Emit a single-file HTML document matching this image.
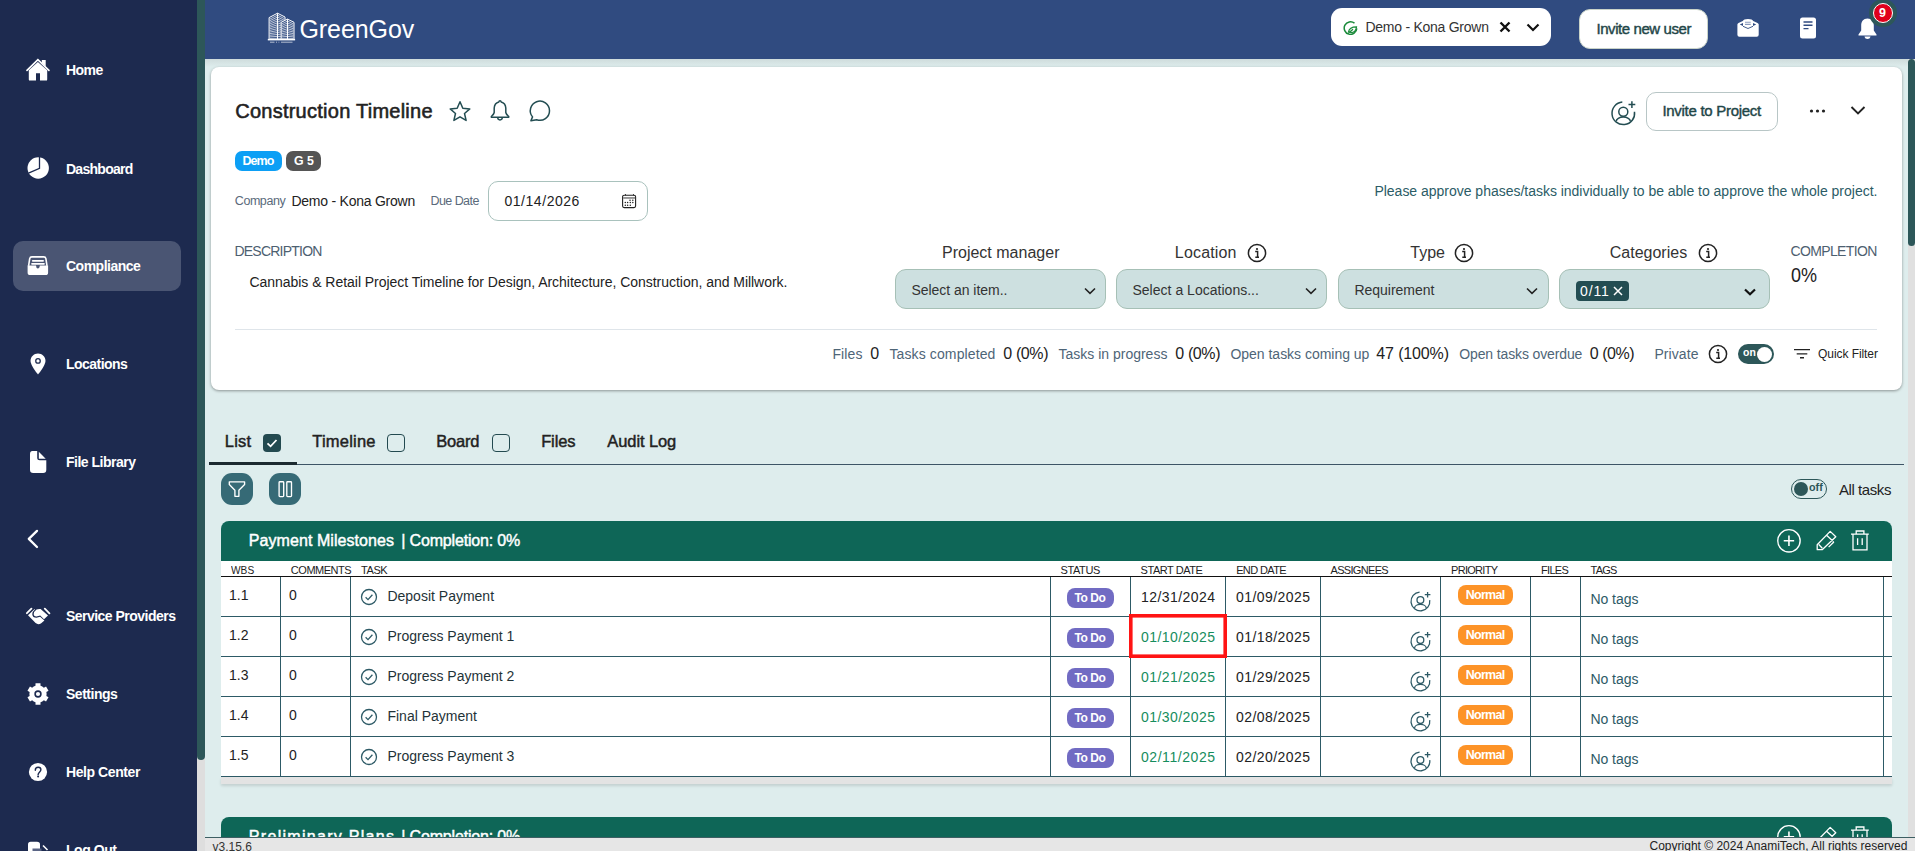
<!DOCTYPE html>
<html><head><meta charset="utf-8"><style>
html,body{margin:0;padding:0;width:1915px;height:851px;overflow:hidden;background:#deeded;font-family:"Liberation Sans",sans-serif}
.a{position:absolute}
.t{line-height:1;white-space:pre}
</style></head><body>
<div class="a" style="left:0px;top:0px;width:197px;height:851px;background:#1d2a4f"></div><div class="a" style="left:13px;top:241px;width:168px;height:50px;background:#4a5573;border-radius:10px"></div><div class="a t" style="left:65.94px;top:63.17px;font-size:14px;font-weight:700;color:#fff;letter-spacing:-0.509px;">Home</div><div class="a t" style="left:65.94px;top:161.77px;font-size:14px;font-weight:700;color:#fff;letter-spacing:-0.718px;">Dashboard</div><div class="a t" style="left:65.94px;top:259.17px;font-size:14px;font-weight:700;color:#fff;letter-spacing:-0.487px;">Compliance</div><div class="a t" style="left:65.94px;top:357.17px;font-size:14px;font-weight:700;color:#fff;letter-spacing:-0.518px;">Locations</div><div class="a t" style="left:65.94px;top:455.17px;font-size:14px;font-weight:700;color:#fff;letter-spacing:-0.499px;">File Library</div><div class="a t" style="left:65.94px;top:608.67px;font-size:14px;font-weight:700;color:#fff;letter-spacing:-0.520px;">Service Providers</div><div class="a t" style="left:65.94px;top:686.87px;font-size:14px;font-weight:700;color:#fff;letter-spacing:-0.465px;">Settings</div><div class="a t" style="left:65.94px;top:764.87px;font-size:14px;font-weight:700;color:#fff;letter-spacing:-0.410px;">Help Center</div><div class="a t" style="left:65.94px;top:843.17px;font-size:14px;font-weight:700;color:#fff;letter-spacing:-0.446px;">Log Out</div><svg class="a" style="left:26px;top:57px;" width="24" height="25" viewBox="0 0 24 25"><path d="M1 13.3 L11.9 2.6 L22.9 13.3" stroke="#fff" stroke-width="1.7" fill="none" stroke-linecap="round"/><path d="M15.8 3 H19.7 V9.5 L15.8 5.8 Z" fill="#fff"/><path d="M2.8 13.2 L11.9 4.9 L21.2 13.2 V22.4 Q21.2 23.6 20 23.6 H14 V16.2 H10 V23.6 H4 Q2.8 23.6 2.8 22.4 Z" fill="#fff"/></svg><svg class="a" style="left:27px;top:157px;" width="23" height="23" viewBox="0 0 23 23"><circle cx="11.2" cy="11" r="10.7" fill="#fff"/><path d="M12.5 -0.5 V11.4 L1.5 16.2" stroke="#1d2a4f" stroke-width="1.3" fill="none"/></svg><svg class="a" style="left:27px;top:256px;" width="22" height="20" viewBox="0 0 22 20"><path d="M1.6 9.8 L2.7 2.6 Q3.1 0.9 4.9 0.9 H16.7 Q18.5 0.9 18.9 2.6 L20 9.8" stroke="#fff" stroke-width="1.6" fill="none"/><rect x="4.9" y="3.9" width="12.1" height="1.8" rx=".9" fill="#fff"/><rect x="4.1" y="6.9" width="13.8" height="1.9" rx=".95" fill="#fff"/><path d="M0.6 9.6 H9 Q9.2 12.6 10.8 12.6 Q12.6 12.6 12.8 9.6 H21.1 V16.4 Q21.1 19 18.6 19 H3.1 Q0.6 19 0.6 16.4 Z" fill="#fff"/></svg><svg class="a" style="left:30px;top:353px;" width="16" height="22" viewBox="0 0 16 22"><path d="M8 0.5 C3.8 0.5 0.5 3.8 0.5 8 C0.5 12.5 8 21.5 8 21.5 C8 21.5 15.5 12.5 15.5 8 C15.5 3.8 12.2 0.5 8 0.5 Z" fill="#fff"/><circle cx="8" cy="7.9" r="2.9" fill="#1d2a4f"/><circle cx="8" cy="7.9" r="1.6" fill="#fff"/></svg><svg class="a" style="left:29px;top:450px;" width="18" height="24" viewBox="0 0 18 24"><path d="M3.4 1 H8.2 V7.8 Q8.2 10.3 10.7 10.3 H17.3 V19.8 Q17.3 23 14.1 23 H4.2 Q1 23 1 19.8 V4.2 Q1 1 3.4 1 Z" fill="#fff"/><path d="M9.8 1.8 L16.7 8.8 H9.8 Z" fill="#fff"/></svg><svg class="a" style="left:26px;top:528px;" width="14" height="22" viewBox="0 0 14 22"><path d="M11 2.9 L2.8 10.9 L11 19" stroke="#fff" stroke-width="2.3" fill="none" stroke-linecap="round" stroke-linejoin="round"/></svg><svg class="a" style="left:26px;top:607px;" width="25" height="18" viewBox="0 0 25 18"><path d="M0.9 6.2 L5.4 1.7 M18.8 1.7 L23.4 6.4" stroke="#fff" stroke-width="1.8" stroke-linecap="round"/><path d="M10.5 2.6 Q12.5 1.8 14.6 2.1 L22 8.4 L18 12.2 L14.2 8.4 L10.5 9.4 Q7.6 9.5 7.7 7 Q7.9 4.6 10.5 2.6 Z" fill="#fff"/><path d="M2 8.2 L8.3 2.3 L9.2 2.3 Q6.2 4.8 6.3 7.2 Q6.5 10.7 10.5 10.7 L14.1 9.8 L18.4 13.4 L15.2 16.3 Q12.2 18.2 9.6 16.1 Z" fill="#fff"/></svg><svg class="a" style="left:27px;top:683px;" width="22" height="22" viewBox="0 0 22 22"><path fill="#fff" d="M15.30 3.55 L13.51 2.78 L13.47 0.28 L8.53 0.28 L8.49 2.78 L6.70 3.55 L6.70 3.55 L5.13 4.71 L2.96 3.50 L0.48 7.78 L2.62 9.07 L2.40 11.00 L2.40 11.00 L2.62 12.93 L0.48 14.22 L2.96 18.50 L5.13 17.29 L6.70 18.45 L6.70 18.45 L8.49 19.22 L8.53 21.72 L13.47 21.72 L13.51 19.22 L15.30 18.45 L15.30 18.45 L16.87 17.29 L19.04 18.50 L21.52 14.22 L19.38 12.93 L19.60 11.00 L19.60 11.00 L19.38 9.07 L21.52 7.78 L19.04 3.50 L16.87 4.71 L15.30 3.55 Z"/><circle cx="11" cy="11" r="3.7" fill="#1d2a4f"/><circle cx="11" cy="11" r="2.1" fill="#fff"/></svg><svg class="a" style="left:28px;top:762px;" width="20" height="20" viewBox="0 0 20 20"><circle cx="10" cy="10" r="9.1" fill="#fff"/><path d="M7.3 8.2 C7.3 6.3 8.5 5.3 10.2 5.3 C11.9 5.3 12.9 6.3 12.9 7.8 C12.9 9.8 10.1 10.3 10.1 12.8" stroke="#1d2a4f" stroke-width="1.4" fill="none" stroke-linecap="round"/><circle cx="10.1" cy="14.6" r="1" fill="#1d2a4f"/></svg><svg class="a" style="left:27px;top:841px;" width="24" height="12" viewBox="0 0 24 12"><path d="M1 12 V3.5 Q1 0.8 3.7 0.8 H10 Q13 0.8 13 3.5 V12 Z" fill="#fff"/><rect x="5.5" y="7.5" width="9" height="5" fill="#5a6585"/><path d="M16 4.5 L20.5 9" stroke="#fff" stroke-width="1.6"/></svg><div class="a" style="left:197px;top:0px;width:8px;height:851px;background:#dedede"></div><div class="a" style="left:197px;top:0px;width:8px;height:760px;background:#2d5759;border-radius:0 0 4px 4px"></div><div class="a" style="left:205px;top:0px;width:1710px;height:59px;background:#304b80"></div><svg class="a" style="left:264px;top:10px;" width="36" height="36" viewBox="0 0 36 36"><path d="M5.1 29.3 V7.6 L13.5 3.2 L21 7 V29.3" fill="#304b80" stroke="#fff" stroke-width="1"/><path d="M13.5 3.2 V29.3" stroke="#fff" stroke-width="1.1"/><path d="M5.70 9.21 L13.5 5.13 L20.40 8.65" stroke="#fff" stroke-width="0.75" fill="none" opacity=".9"/><path d="M5.70 10.81 L13.5 7.07 L20.40 10.30" stroke="#fff" stroke-width="0.75" fill="none" opacity=".9"/><path d="M5.70 12.42 L13.5 9.00 L20.40 11.96" stroke="#fff" stroke-width="0.75" fill="none" opacity=".9"/><path d="M5.70 14.03 L13.5 10.93 L20.40 13.61" stroke="#fff" stroke-width="0.75" fill="none" opacity=".9"/><path d="M5.70 15.64 L13.5 12.87 L20.40 15.26" stroke="#fff" stroke-width="0.75" fill="none" opacity=".9"/><path d="M5.70 17.24 L13.5 14.80 L20.40 16.91" stroke="#fff" stroke-width="0.75" fill="none" opacity=".9"/><path d="M5.70 18.85 L13.5 16.73 L20.40 18.56" stroke="#fff" stroke-width="0.75" fill="none" opacity=".9"/><path d="M5.70 20.46 L13.5 18.67 L20.40 20.21" stroke="#fff" stroke-width="0.75" fill="none" opacity=".9"/><path d="M5.70 22.07 L13.5 20.60 L20.40 21.87" stroke="#fff" stroke-width="0.75" fill="none" opacity=".9"/><path d="M5.70 23.67 L13.5 22.53 L20.40 23.52" stroke="#fff" stroke-width="0.75" fill="none" opacity=".9"/><path d="M5.70 25.28 L13.5 24.47 L20.40 25.17" stroke="#fff" stroke-width="0.75" fill="none" opacity=".9"/><path d="M5.70 26.89 L13.5 26.40 L20.40 26.82" stroke="#fff" stroke-width="0.75" fill="none" opacity=".9"/><path d="M5.70 28.50 L13.5 28.33 L20.40 28.47" stroke="#fff" stroke-width="0.75" fill="none" opacity=".9"/><path d="M17.2 29.3 V12.3 L23.5 9.1 L30 12.3 V29.3" fill="#304b80" stroke="#fff" stroke-width="1"/><path d="M23.5 9.1 V29.3" stroke="#fff" stroke-width="1.1"/><path d="M17.80 13.92 L23.5 11.02 L29.40 13.92" stroke="#fff" stroke-width="0.75" fill="none" opacity=".9"/><path d="M17.80 15.54 L23.5 12.95 L29.40 15.54" stroke="#fff" stroke-width="0.75" fill="none" opacity=".9"/><path d="M17.80 17.16 L23.5 14.87 L29.40 17.16" stroke="#fff" stroke-width="0.75" fill="none" opacity=".9"/><path d="M17.80 18.78 L23.5 16.80 L29.40 18.78" stroke="#fff" stroke-width="0.75" fill="none" opacity=".9"/><path d="M17.80 20.40 L23.5 18.72 L29.40 20.40" stroke="#fff" stroke-width="0.75" fill="none" opacity=".9"/><path d="M17.80 22.01 L23.5 20.64 L29.40 22.01" stroke="#fff" stroke-width="0.75" fill="none" opacity=".9"/><path d="M17.80 23.63 L23.5 22.57 L29.40 23.63" stroke="#fff" stroke-width="0.75" fill="none" opacity=".9"/><path d="M17.80 25.25 L23.5 24.49 L29.40 25.25" stroke="#fff" stroke-width="0.75" fill="none" opacity=".9"/><path d="M17.80 26.87 L23.5 26.41 L29.40 26.87" stroke="#fff" stroke-width="0.75" fill="none" opacity=".9"/><path d="M17.80 28.49 L23.5 28.34 L29.40 28.49" stroke="#fff" stroke-width="0.75" fill="none" opacity=".9"/><rect x="3.8" y="28.9" width="27.3" height="1.5" fill="#fff"/><path d="M6 32.2 H10.5 M12 32.2 H13 M14.5 32.2 H15.3 M17 32.2 H28.5" stroke="#fff" stroke-width="0.9" opacity=".7"/></svg><div class="a t" style="left:299.50px;top:16.74px;font-size:25px;font-weight:400;color:#fff;letter-spacing:-0.085px;">GreenGov</div><div class="a" style="left:1331px;top:8px;width:220px;height:38px;background:#fff;border-radius:11px"></div><svg class="a" style="left:1343px;top:20px;" width="15" height="15" viewBox="0 0 15 15"><path d="M11.5 3.2 A6.3 6.3 0 1 0 13.8 8.5" stroke="#1a8a3a" stroke-width="1.5" fill="none"/><path d="M5.5 12 C6 8.5 8.5 6.8 13.5 6.8 C13.2 11 11 12.8 7.2 12.6 M5 13.5 L10 9.3" stroke="#1a8a3a" stroke-width="1.3" fill="none"/></svg><div class="a t" style="left:1365.44px;top:20.17px;font-size:14px;font-weight:400;color:#333;letter-spacing:-0.258px;">Demo - Kona Grown</div><svg class="a" style="left:1499px;top:21px;" width="12" height="12" viewBox="0 0 12 12"><path d="M1.5 1.5 L10.5 10.5 M10.5 1.5 L1.5 10.5" stroke="#111" stroke-width="2.4"/></svg><svg class="a" style="left:1526px;top:23px;" width="14" height="9" viewBox="0 0 14 9"><path d="M1.5 1.5 L7 7 L12.5 1.5" stroke="#111" stroke-width="2.2" fill="none"/></svg><div class="a" style="left:1579px;top:9px;width:129px;height:40px;background:#fff;border-radius:11px;box-sizing:border-box;border:1px solid #c9d3c8"></div><div class="a t" style="left:1596.40px;top:21.44px;font-size:15px;font-weight:400;-webkit-text-stroke:0.42px currentColor;color:#1f4648;letter-spacing:-0.417px;">Invite new user</div><svg class="a" style="left:1736px;top:18px;" width="24" height="20" viewBox="0 0 24 20"><path d="M1.4 6.5 Q1.4 5.5 2.5 5 L6.8 3 Q7.5 0.9 12 0.9 Q16.5 0.9 17.2 3 L21.5 5 Q22.7 5.5 22.7 6.5 V16.8 Q22.7 18.8 20.7 18.8 H3.4 Q1.4 18.8 1.4 16.8 Z" fill="#fff"/><path d="M9 4.3 H14.7 M9 6.4 H14.7" stroke="#8a9bbd" stroke-width="1.1"/><path d="M3.8 6.5 L7 4.9 V8.1 Z M20.2 6.5 L17 4.9 V8.1 Z" fill="#304b80"/><path d="M7 8.3 L12 10.5 L17 8.3" stroke="#304b80" stroke-width="0.9" fill="none"/></svg><svg class="a" style="left:1799px;top:17px;" width="18" height="22" viewBox="0 0 18 22"><rect x="1" y="0.5" width="16" height="21" rx="2.5" fill="#fff"/><path d="M4.5 5 H13.5 M4.5 8.3 H13.5 M4.5 11.6 H9.5" stroke="#304b80" stroke-width="1.4"/></svg><svg class="a" style="left:1857px;top:17px;" width="21" height="23" viewBox="0 0 21 23"><path d="M10.5 1.5 C6.3 1.5 4.2 4.7 4.2 8.3 V13.5 L1.5 17.5 V18.5 H19.5 V17.5 L16.8 13.5 V8.3 C16.8 4.7 14.7 1.5 10.5 1.5 Z" fill="#fff"/><path d="M7.5 19.5 C7.8 21.2 9 22 10.5 22 C12 22 13.2 21.2 13.5 19.5 Z" fill="#fff"/></svg><div class="a" style="left:1869px;top:-1px;width:28px;height:28px;background:#2d5759;border-radius:50%"></div><div class="a" style="left:1873px;top:3px;width:20px;height:20px;background:#e0001b;border-radius:50%;border:1px solid #fff;box-sizing:border-box"></div><div class="a t" style="left:1879.00px;top:6.87px;font-size:12.5px;font-weight:700;color:#fff;letter-spacing:0.000px;">9</div><div class="a" style="left:1908px;top:59px;width:7px;height:792px;background:#e0e0e0"></div><div class="a" style="left:1908px;top:59px;width:7px;height:187px;background:#2d5759;border-radius:4px 4px 4px 4px"></div><div class="a" style="left:205px;top:59px;width:1703px;height:778px;background:#deeded"></div><div class="a" style="left:205px;top:59px;width:1703px;height:8px;background:linear-gradient(#cfdcdc,#deeded)"></div><div class="a" style="left:211px;top:67px;width:1691px;height:323px;background:#fff;border-radius:8px;box-shadow:0 1px 3px rgba(0,0,0,.38)"></div><div class="a t" style="left:235.20px;top:101.39px;font-size:20px;font-weight:400;-webkit-text-stroke:0.56px currentColor;color:#222;letter-spacing:0.254px;">Construction Timeline</div><svg class="a" style="left:448px;top:100px;" width="24" height="22" viewBox="0 0 24 22"><path d="M12 1.8 L14.8 8.3 L21.8 8.9 L16.5 13.5 L18.1 20.4 L12 16.8 L5.9 20.4 L7.5 13.5 L2.2 8.9 L9.2 8.3 Z" fill="none" stroke="#234d52" stroke-width="1.5" stroke-linejoin="round"/></svg><svg class="a" style="left:489px;top:99px;" width="22" height="24" viewBox="0 0 22 24"><path d="M11 1.8 Q12 1.8 12.2 3 Q16.5 4.2 16.8 9 V13.5 Q17.2 15.5 19.3 17 Q20 17.5 19.6 18.3 H2.4 Q2 17.5 2.7 17 Q4.8 15.5 5.2 13.5 V9 Q5.5 4.2 9.8 3 Q10 1.8 11 1.8 Z" fill="none" stroke="#234d52" stroke-width="1.5" stroke-linejoin="round"/><path d="M8.7 18.6 A2.3 2.3 0 0 0 13.3 18.6" fill="none" stroke="#234d52" stroke-width="1.5"/></svg><svg class="a" style="left:528px;top:99px;" width="24" height="24" viewBox="0 0 24 24"><path d="M4.55 17.87 L2.9 21.7 L8.62 20.72 A9.6 9.6 0 1 0 4.55 17.87 Z" fill="none" stroke="#234d52" stroke-width="1.5" stroke-linejoin="round"/></svg><svg class="a" style="left:1608.7px;top:98.7px;" width="36" height="28" viewBox="0 0 36 28"><path d="M13.32 3.04 A11.3 11.3 0 1 0 25.49 12.73" fill="none" stroke="#234d52" stroke-width="1.5"/><circle cx="14.30" cy="12.70" r="4.5" fill="none" stroke="#234d52" stroke-width="1.5"/><path d="M7.29 22.21 A7.01 4.11 0 0 1 21.31 22.21" fill="none" stroke="#234d52" stroke-width="1.5"/><path d="M19.50 5.60 H26.30 M22.90 2.20 V9.00" stroke="#234d52" stroke-width="1.5"/></svg><div class="a" style="left:1646px;top:91.5px;width:132px;height:39.5px;border:1px solid #b8c6c6;border-radius:10px;box-sizing:border-box"></div><div class="a t" style="left:1662.40px;top:103.34px;font-size:15px;font-weight:400;-webkit-text-stroke:0.42px currentColor;color:#1f4648;letter-spacing:-0.284px;">Invite to Project</div><svg class="a" style="left:1809px;top:107px;" width="18" height="8" viewBox="0 0 18 8"><circle cx="2.5" cy="4" r="1.6" fill="#222"/><circle cx="8.5" cy="4" r="1.6" fill="#222"/><circle cx="14.5" cy="4" r="1.6" fill="#222"/></svg><svg class="a" style="left:1850px;top:105px;" width="16" height="11" viewBox="0 0 16 11"><path d="M1.5 2 L8 8.5 L14.5 2" stroke="#222" stroke-width="1.9" fill="none"/></svg><div class="a" style="left:235px;top:151px;width:47px;height:20px;background:#0c9ff5;border-radius:7px"></div><div class="a t" style="left:242.50px;top:154.87px;font-size:12.5px;font-weight:700;color:#fff;letter-spacing:-0.953px;">Demo</div><div class="a" style="left:286px;top:151px;width:35px;height:20px;background:#555;border-radius:7px"></div><div class="a t" style="left:293.50px;top:154.87px;font-size:12.5px;font-weight:700;color:#fff;letter-spacing:0.000px;transform:scaleX(0.9860);transform-origin:0 0;">G 5</div><div class="a t" style="left:234.80px;top:194.67px;font-size:12.5px;font-weight:400;color:#5a6a7b;letter-spacing:-0.438px;">Company</div><div class="a t" style="left:291.44px;top:194.47px;font-size:14px;font-weight:400;color:#222;letter-spacing:-0.239px;">Demo - Kona Grown</div><div class="a t" style="left:430.50px;top:194.67px;font-size:12.5px;font-weight:400;color:#5a6a7b;letter-spacing:-0.562px;">Due Date</div><div class="a" style="left:488px;top:181px;width:160px;height:40px;border:1px solid #a9c2bd;border-radius:10px;box-sizing:border-box"></div><div class="a t" style="left:504.44px;top:194.47px;font-size:14px;font-weight:400;color:#222;letter-spacing:0.545px;">01/14/2026</div><svg class="a" style="left:621px;top:193px;" width="16" height="16" viewBox="0 0 16 16"><rect x="1.6" y="2.2" width="13" height="12.4" rx="1.6" fill="none" stroke="#222" stroke-width="1.1"/><rect x="2.1" y="4.1" width="12" height="1.7" fill="#8a8a8a"/><path d="M4.5 1.2 V2.4 M12.5 1.2 V2.4" stroke="#222" stroke-width="1"/><circle cx="9" cy="7.3" r="0.75" fill="#222"/><circle cx="11.8" cy="7.3" r="0.75" fill="#222"/><circle cx="4.3" cy="9.6" r="0.75" fill="#222"/><circle cx="6.6" cy="9.6" r="0.75" fill="#222"/><circle cx="9.3" cy="9.6" r="0.75" fill="#222"/><circle cx="11.8" cy="9.6" r="0.75" fill="#222"/><circle cx="4.3" cy="12.2" r="0.75" fill="#222"/><circle cx="6.6" cy="12.2" r="0.75" fill="#222"/><circle cx="9.3" cy="12.2" r="0.75" fill="#222"/></svg><div class="a t" style="left:1374.44px;top:184.17px;font-size:14px;font-weight:400;color:#2b5c66;letter-spacing:-0.017px;">Please approve phases/tasks individually to be able to approve the whole project.</div><div class="a t" style="left:234.44px;top:243.87px;font-size:14px;font-weight:400;color:#4d6070;letter-spacing:-0.771px;">DESCRIPTION</div><div class="a t" style="left:249.44px;top:274.57px;font-size:14px;font-weight:400;color:#222;letter-spacing:-0.032px;">Cannabis &amp; Retail Project Timeline for Design, Architecture, Construction, and Millwork.</div><div class="a t" style="left:941.96px;top:244.91px;font-size:16px;font-weight:400;color:#333;letter-spacing:0.009px;">Project manager</div><div class="a t" style="left:1174.86px;top:244.91px;font-size:16px;font-weight:400;color:#333;letter-spacing:0.160px;">Location</div><div class="a t" style="left:1410.36px;top:244.91px;font-size:16px;font-weight:400;color:#333;letter-spacing:-0.023px;">Type</div><div class="a t" style="left:1609.76px;top:244.91px;font-size:16px;font-weight:400;color:#333;letter-spacing:0.005px;">Categories</div><svg class="a" style="left:1246.5px;top:242.5px;" width="20" height="20" viewBox="0 0 20 20"><circle cx="10" cy="10" r="8.6" fill="none" stroke="#222" stroke-width="1.5"/><circle cx="10" cy="6" r="1.1" fill="#222"/><path d="M8.2 8.6 H10.6 V14.3 M8.3 14.3 H12" stroke="#222" stroke-width="1.5" fill="none"/></svg><svg class="a" style="left:1454.3px;top:242.5px;" width="20" height="20" viewBox="0 0 20 20"><circle cx="10" cy="10" r="8.6" fill="none" stroke="#222" stroke-width="1.5"/><circle cx="10" cy="6" r="1.1" fill="#222"/><path d="M8.2 8.6 H10.6 V14.3 M8.3 14.3 H12" stroke="#222" stroke-width="1.5" fill="none"/></svg><svg class="a" style="left:1697.5px;top:242.5px;" width="20" height="20" viewBox="0 0 20 20"><circle cx="10" cy="10" r="8.6" fill="none" stroke="#222" stroke-width="1.5"/><circle cx="10" cy="6" r="1.1" fill="#222"/><path d="M8.2 8.6 H10.6 V14.3 M8.3 14.3 H12" stroke="#222" stroke-width="1.5" fill="none"/></svg><div class="a" style="left:895px;top:269px;width:211px;height:40px;background:#cde0e0;border:1px solid #a6c0b6;border-radius:11px;box-sizing:border-box"></div><div class="a" style="left:1116px;top:269px;width:211px;height:40px;background:#cde0e0;border:1px solid #a6c0b6;border-radius:11px;box-sizing:border-box"></div><div class="a" style="left:1338px;top:269px;width:211px;height:40px;background:#cde0e0;border:1px solid #a6c0b6;border-radius:11px;box-sizing:border-box"></div><div class="a" style="left:1559px;top:269px;width:211px;height:40px;background:#cde0e0;border:1px solid #a6c0b6;border-radius:11px;box-sizing:border-box"></div><svg class="a" style="left:1084px;top:287px;" width="12" height="8" viewBox="0 0 12 8"><path d="M1 1.5 L6 6.3 L11 1.5" stroke="#222" stroke-width="1.6" fill="none"/></svg><svg class="a" style="left:1305px;top:287px;" width="12" height="8" viewBox="0 0 12 8"><path d="M1 1.5 L6 6.3 L11 1.5" stroke="#222" stroke-width="1.6" fill="none"/></svg><svg class="a" style="left:1526px;top:287px;" width="12" height="8" viewBox="0 0 12 8"><path d="M1 1.5 L6 6.3 L11 1.5" stroke="#222" stroke-width="1.6" fill="none"/></svg><svg class="a" style="left:1744px;top:287.5px;" width="12" height="8" viewBox="0 0 12 8"><path d="M1 1.5 L6 6.3 L11 1.5" stroke="#111" stroke-width="2.2" fill="none"/></svg><div class="a t" style="left:911.44px;top:283.17px;font-size:14px;font-weight:400;color:#333;letter-spacing:-0.035px;">Select an item..</div><div class="a t" style="left:1132.44px;top:283.17px;font-size:14px;font-weight:400;color:#333;letter-spacing:0.020px;">Select a Locations...</div><div class="a t" style="left:1354.44px;top:283.17px;font-size:14px;font-weight:400;color:#333;letter-spacing:-0.018px;">Requirement</div><div class="a" style="left:1576px;top:281px;width:53px;height:20px;background:#234d52;border-radius:4px"></div><div class="a t" style="left:1579.94px;top:283.67px;font-size:14px;font-weight:400;color:#fff;letter-spacing:0.920px;">0/11</div><svg class="a" style="left:1613px;top:286px;" width="10" height="10" viewBox="0 0 10 10"><path d="M1 1 L9 9 M9 1 L1 9" stroke="#fff" stroke-width="1.5"/></svg><div class="a t" style="left:1790.44px;top:244.17px;font-size:14px;font-weight:400;color:#4d6070;letter-spacing:-0.622px;">COMPLETION</div><div class="a t" style="left:1790.68px;top:264.72px;font-size:20.5px;font-weight:400;color:#222;letter-spacing:0.000px;transform:scaleX(0.8784);transform-origin:0 0;">0%</div><div class="a" style="left:235px;top:329px;width:1642px;height:1px;background:#dfe5ea"></div><div class="a t" style="left:832.44px;top:346.97px;font-size:14px;font-weight:400;color:#4e6577;letter-spacing:0.104px;">Files</div><div class="a t" style="left:870.36px;top:346.11px;font-size:16px;font-weight:400;color:#222;letter-spacing:0.000px;">0</div><div class="a t" style="left:889.44px;top:346.97px;font-size:14px;font-weight:400;color:#4e6577;letter-spacing:0.121px;">Tasks completed</div><div class="a t" style="left:1003.36px;top:346.11px;font-size:16px;font-weight:400;color:#222;letter-spacing:-0.401px;">0 (0%)</div><div class="a t" style="left:1058.44px;top:346.97px;font-size:14px;font-weight:400;color:#4e6577;letter-spacing:0.003px;">Tasks in progress</div><div class="a t" style="left:1175.36px;top:346.11px;font-size:16px;font-weight:400;color:#222;letter-spacing:-0.401px;">0 (0%)</div><div class="a t" style="left:1230.44px;top:346.97px;font-size:14px;font-weight:400;color:#4e6577;letter-spacing:-0.017px;">Open tasks coming up</div><div class="a t" style="left:1376.36px;top:346.11px;font-size:16px;font-weight:400;color:#222;letter-spacing:-0.151px;">47 (100%)</div><div class="a t" style="left:1459.24px;top:346.97px;font-size:14px;font-weight:400;color:#4e6577;letter-spacing:-0.125px;">Open tasks overdue</div><div class="a t" style="left:1589.86px;top:346.11px;font-size:16px;font-weight:400;color:#222;letter-spacing:-0.501px;">0 (0%)</div><div class="a t" style="left:1654.44px;top:346.97px;font-size:14px;font-weight:400;color:#4e6577;letter-spacing:0.067px;">Private</div><svg class="a" style="left:1707.5px;top:344px;" width="20" height="20" viewBox="0 0 20 20"><circle cx="10" cy="10" r="8.6" fill="none" stroke="#222" stroke-width="1.5"/><circle cx="10" cy="6" r="1.1" fill="#222"/><path d="M8.2 8.6 H10.6 V14.3 M8.3 14.3 H12" stroke="#222" stroke-width="1.5" fill="none"/></svg><div class="a" style="left:1738px;top:344px;width:36px;height:20px;background:#2d5759;border-radius:10px"></div><div class="a" style="left:1756.5px;top:346.5px;width:15px;height:15px;background:#fff;border-radius:50%"></div><div class="a t" style="left:1742.56px;top:347.06px;font-size:11px;font-weight:700;color:#fff;letter-spacing:0.000px;transform:scaleX(0.9492);transform-origin:0 0;">on</div><svg class="a" style="left:1793px;top:346px;" width="18" height="14" viewBox="0 0 18 14"><path d="M1 3.6 H17 M3.7 7.9 H14.3 M7 11.7 H11" stroke="#222" stroke-width="1.4"/></svg><div class="a t" style="left:1818.12px;top:348.03px;font-size:12px;font-weight:400;color:#222;letter-spacing:-0.077px;">Quick Filter</div><div class="a t" style="left:224.74px;top:433.25px;font-size:16.5px;font-weight:400;-webkit-text-stroke:0.46px currentColor;color:#222;letter-spacing:0.256px;">List</div><div class="a t" style="left:312.34px;top:433.25px;font-size:16.5px;font-weight:400;-webkit-text-stroke:0.46px currentColor;color:#222;letter-spacing:0.201px;">Timeline</div><div class="a t" style="left:436.34px;top:433.25px;font-size:16.5px;font-weight:400;-webkit-text-stroke:0.46px currentColor;color:#222;letter-spacing:-0.219px;">Board</div><div class="a t" style="left:541.14px;top:433.25px;font-size:16.5px;font-weight:400;-webkit-text-stroke:0.46px currentColor;color:#222;letter-spacing:-0.122px;">Files</div><div class="a t" style="left:607.34px;top:433.25px;font-size:16.5px;font-weight:400;-webkit-text-stroke:0.46px currentColor;color:#222;letter-spacing:-0.097px;">Audit Log</div><div class="a" style="left:263px;top:434px;width:18px;height:18px;background:#234a50;border-radius:4px"></div><svg class="a" style="left:263px;top:434px;" width="18" height="18" viewBox="0 0 18 18"><path d="M4.5 9.3 L7.6 12.3 L13.5 6" stroke="#fff" stroke-width="1.8" fill="none"/></svg><div class="a" style="left:387px;top:434px;width:18px;height:18px;border:1.3px solid #234a50;border-radius:4px;box-sizing:border-box"></div><div class="a" style="left:492px;top:434px;width:18px;height:18px;border:1.3px solid #234a50;border-radius:4px;box-sizing:border-box"></div><div class="a" style="left:209px;top:463.5px;width:1695px;height:1.3px;background:#3d5566"></div><div class="a" style="left:209px;top:461.5px;width:88px;height:3px;background:#1b2a30"></div><div class="a" style="left:221px;top:473px;width:32px;height:32px;background:#366a76;border-radius:11px"></div><svg class="a" style="left:221px;top:473px;" width="32" height="32" viewBox="0 0 32 32"><path d="M8.3 8.8 H23.6 V11.5 L17.9 17.2 V23.3 H13.9 V17.2 L8.3 11.5 Z" fill="none" stroke="#fff" stroke-width="1.35" stroke-linejoin="round"/></svg><div class="a" style="left:269px;top:473px;width:32px;height:32px;background:#366a76;border-radius:11px"></div><svg class="a" style="left:269px;top:473px;" width="32" height="32" viewBox="0 0 32 32"><rect x="10.1" y="8.7" width="4.6" height="14.9" rx="0.8" fill="none" stroke="#fff" stroke-width="1.35"/><rect x="17.8" y="8.7" width="4.7" height="14.9" rx="0.8" fill="none" stroke="#fff" stroke-width="1.35"/></svg><div class="a" style="left:1791px;top:479px;width:36px;height:20px;border:1.3px solid #2d5759;border-radius:10px;box-sizing:border-box"></div><div class="a" style="left:1794px;top:482px;width:14px;height:14px;background:#2d5759;border-radius:50%"></div><div class="a t" style="left:1808.58px;top:482.33px;font-size:10.5px;font-weight:700;color:#2d5759;letter-spacing:0.000px;transform:scaleX(1.0233);transform-origin:0 0;">off</div><div class="a t" style="left:1838.90px;top:482.04px;font-size:15px;font-weight:400;color:#222;letter-spacing:-0.414px;">All tasks</div><div class="a" style="left:221px;top:521px;width:1671px;height:40px;background:#0e6657;border-radius:8px 8px 0 0"></div><div class="a t" style="left:248.86px;top:532.51px;font-size:16px;font-weight:400;-webkit-text-stroke:0.45px currentColor;color:#fff;letter-spacing:0.062px;">Payment Milestones</div><div class="a t" style="left:401.36px;top:532.51px;font-size:16px;font-weight:400;-webkit-text-stroke:0.45px currentColor;color:#fff;letter-spacing:-0.182px;">| Completion: 0%</div><svg class="a" style="left:1776px;top:528px;" width="26" height="26" viewBox="0 0 26 26"><circle cx="12.95" cy="12.8" r="11.2" fill="none" stroke="#fff" stroke-width="1.4"/><path d="M12.95 7.6 V18 M7.75 12.8 H18.15" stroke="#fff" stroke-width="1.6"/></svg><svg class="a" style="left:1815px;top:530px;" width="24" height="24" viewBox="0 0 24 24"><path d="M2.2 14.8 L15.2 1.4 L20.8 6.8 L7.2 19.7 H2.2 Z M3.8 14.5 L7.3 18.3 M11.6 5.3 L17.3 10.5 M13.6 17.1 L18.6 12.3 L17.8 11.4" fill="none" stroke="#fff" stroke-width="1.3" stroke-linejoin="round"/></svg><svg class="a" style="left:1850px;top:530px;" width="20" height="22" viewBox="0 0 20 22"><path d="M1 4.2 H18.8 M6.2 4.2 V1 H13.9 V4.2 M3 4.2 V19.8 H17 V4.2 M7.6 8.2 V15.1 M12.2 8.2 V15.1" fill="none" stroke="#fff" stroke-width="1.3"/></svg><div class="a" style="left:221px;top:561px;width:1671px;height:216px;background:#fff"></div><div class="a t" style="left:231.06px;top:564.96px;font-size:11px;font-weight:400;color:#222;letter-spacing:0.000px;transform:scaleX(0.9245);transform-origin:0 0;">WBS</div><div class="a t" style="left:290.86px;top:564.96px;font-size:11px;font-weight:400;color:#222;letter-spacing:-0.486px;">COMMENTS</div><div class="a t" style="left:361.06px;top:564.96px;font-size:11px;font-weight:400;color:#222;letter-spacing:-0.451px;">TASK</div><div class="a t" style="left:1060.56px;top:564.96px;font-size:11px;font-weight:400;color:#222;letter-spacing:-0.399px;">STATUS</div><div class="a t" style="left:1140.56px;top:564.96px;font-size:11px;font-weight:400;color:#222;letter-spacing:-0.450px;">START DATE</div><div class="a t" style="left:1236.16px;top:564.96px;font-size:11px;font-weight:400;color:#222;letter-spacing:-0.620px;">END DATE</div><div class="a t" style="left:1330.56px;top:564.96px;font-size:11px;font-weight:400;color:#222;letter-spacing:-0.689px;">ASSIGNEES</div><div class="a t" style="left:1451.06px;top:564.96px;font-size:11px;font-weight:400;color:#222;letter-spacing:-0.712px;">PRIORITY</div><div class="a t" style="left:1541.06px;top:564.96px;font-size:11px;font-weight:400;color:#222;letter-spacing:-0.702px;">FILES</div><div class="a t" style="left:1590.56px;top:564.96px;font-size:11px;font-weight:400;color:#222;letter-spacing:-0.790px;">TAGS</div><div class="a" style="left:221px;top:575.5px;width:1671px;height:1.5px;background:#111"></div><div class="a" style="left:221px;top:616px;width:1671px;height:1.3px;background:#2d5a66"></div><div class="a t" style="left:229.04px;top:587.77px;font-size:14px;font-weight:400;color:#222;letter-spacing:0.000px;">1.1</div><div class="a t" style="left:289.04px;top:587.77px;font-size:14px;font-weight:400;color:#222;letter-spacing:0.000px;">0</div><svg class="a" style="left:360px;top:588px;" width="18" height="18" viewBox="0 0 18 18"><circle cx="9" cy="9" r="7.5" fill="none" stroke="#2d5a66" stroke-width="1.3"/><path d="M5.6 9.3 L8 11.6 L12.4 6.8" fill="none" stroke="#2d5a66" stroke-width="1.3"/></svg><div class="a t" style="left:387.44px;top:588.67px;font-size:14px;font-weight:400;color:#1f3338;letter-spacing:0.000px;">Deposit Payment</div><div class="a" style="left:1067px;top:588px;width:47px;height:20px;background:#716bc3;border-radius:8px"></div><div class="a t" style="left:1074.52px;top:592.23px;font-size:12px;font-weight:700;color:#fff;letter-spacing:-0.417px;">To Do</div><div class="a t" style="left:1140.94px;top:589.97px;font-size:14px;font-weight:400;color:#222;letter-spacing:0.456px;">12/31/2024</div><div class="a t" style="left:1235.94px;top:589.97px;font-size:14px;font-weight:400;color:#222;letter-spacing:0.456px;">01/09/2025</div><svg class="a" style="left:1407.6px;top:588.6px;" width="31" height="24" viewBox="0 0 31 24"><path d="M11.58 3.04 A9.4 9.4 0 1 0 21.71 11.09" fill="none" stroke="#2d5a66" stroke-width="1.3"/><circle cx="12.40" cy="11.10" r="3.4" fill="none" stroke="#2d5a66" stroke-width="1.3"/><path d="M6.57 18.98 A5.83 3.58 0 0 1 18.23 18.98" fill="none" stroke="#2d5a66" stroke-width="1.3"/><path d="M16.80 5.70 H22.40 M19.60 2.90 V8.50" stroke="#2d5a66" stroke-width="1.3"/></svg><div class="a" style="left:1458px;top:585px;width:55px;height:20px;background:#fd9327;border-radius:8px"></div><div class="a t" style="left:1465.70px;top:588.67px;font-size:12.5px;font-weight:700;color:#fff;letter-spacing:-0.701px;">Normal</div><div class="a t" style="left:1590.44px;top:592.17px;font-size:14px;font-weight:400;color:#2d5a66;letter-spacing:-0.045px;">No tags</div><div class="a" style="left:221px;top:656px;width:1671px;height:1.3px;background:#2d5a66"></div><div class="a t" style="left:229.04px;top:627.77px;font-size:14px;font-weight:400;color:#222;letter-spacing:0.000px;">1.2</div><div class="a t" style="left:289.04px;top:627.77px;font-size:14px;font-weight:400;color:#222;letter-spacing:0.000px;">0</div><svg class="a" style="left:360px;top:628px;" width="18" height="18" viewBox="0 0 18 18"><circle cx="9" cy="9" r="7.5" fill="none" stroke="#2d5a66" stroke-width="1.3"/><path d="M5.6 9.3 L8 11.6 L12.4 6.8" fill="none" stroke="#2d5a66" stroke-width="1.3"/></svg><div class="a t" style="left:387.44px;top:628.67px;font-size:14px;font-weight:400;color:#1f3338;letter-spacing:0.000px;">Progress Payment 1</div><div class="a" style="left:1067px;top:628px;width:47px;height:20px;background:#716bc3;border-radius:8px"></div><div class="a t" style="left:1074.52px;top:632.23px;font-size:12px;font-weight:700;color:#fff;letter-spacing:-0.417px;">To Do</div><div class="a t" style="left:1140.94px;top:629.97px;font-size:14px;font-weight:400;color:#168d5d;letter-spacing:0.456px;">01/10/2025</div><div class="a t" style="left:1235.94px;top:629.97px;font-size:14px;font-weight:400;color:#222;letter-spacing:0.456px;">01/18/2025</div><svg class="a" style="left:1407.6px;top:628.6px;" width="31" height="24" viewBox="0 0 31 24"><path d="M11.58 3.04 A9.4 9.4 0 1 0 21.71 11.09" fill="none" stroke="#2d5a66" stroke-width="1.3"/><circle cx="12.40" cy="11.10" r="3.4" fill="none" stroke="#2d5a66" stroke-width="1.3"/><path d="M6.57 18.98 A5.83 3.58 0 0 1 18.23 18.98" fill="none" stroke="#2d5a66" stroke-width="1.3"/><path d="M16.80 5.70 H22.40 M19.60 2.90 V8.50" stroke="#2d5a66" stroke-width="1.3"/></svg><div class="a" style="left:1458px;top:625px;width:55px;height:20px;background:#fd9327;border-radius:8px"></div><div class="a t" style="left:1465.70px;top:628.67px;font-size:12.5px;font-weight:700;color:#fff;letter-spacing:-0.701px;">Normal</div><div class="a t" style="left:1590.44px;top:632.17px;font-size:14px;font-weight:400;color:#2d5a66;letter-spacing:-0.045px;">No tags</div><div class="a" style="left:221px;top:696px;width:1671px;height:1.3px;background:#2d5a66"></div><div class="a t" style="left:229.04px;top:667.77px;font-size:14px;font-weight:400;color:#222;letter-spacing:0.000px;">1.3</div><div class="a t" style="left:289.04px;top:667.77px;font-size:14px;font-weight:400;color:#222;letter-spacing:0.000px;">0</div><svg class="a" style="left:360px;top:668px;" width="18" height="18" viewBox="0 0 18 18"><circle cx="9" cy="9" r="7.5" fill="none" stroke="#2d5a66" stroke-width="1.3"/><path d="M5.6 9.3 L8 11.6 L12.4 6.8" fill="none" stroke="#2d5a66" stroke-width="1.3"/></svg><div class="a t" style="left:387.44px;top:668.67px;font-size:14px;font-weight:400;color:#1f3338;letter-spacing:0.000px;">Progress Payment 2</div><div class="a" style="left:1067px;top:668px;width:47px;height:20px;background:#716bc3;border-radius:8px"></div><div class="a t" style="left:1074.52px;top:672.23px;font-size:12px;font-weight:700;color:#fff;letter-spacing:-0.417px;">To Do</div><div class="a t" style="left:1140.94px;top:669.97px;font-size:14px;font-weight:400;color:#168d5d;letter-spacing:0.456px;">01/21/2025</div><div class="a t" style="left:1235.94px;top:669.97px;font-size:14px;font-weight:400;color:#222;letter-spacing:0.456px;">01/29/2025</div><svg class="a" style="left:1407.6px;top:668.6px;" width="31" height="24" viewBox="0 0 31 24"><path d="M11.58 3.04 A9.4 9.4 0 1 0 21.71 11.09" fill="none" stroke="#2d5a66" stroke-width="1.3"/><circle cx="12.40" cy="11.10" r="3.4" fill="none" stroke="#2d5a66" stroke-width="1.3"/><path d="M6.57 18.98 A5.83 3.58 0 0 1 18.23 18.98" fill="none" stroke="#2d5a66" stroke-width="1.3"/><path d="M16.80 5.70 H22.40 M19.60 2.90 V8.50" stroke="#2d5a66" stroke-width="1.3"/></svg><div class="a" style="left:1458px;top:665px;width:55px;height:20px;background:#fd9327;border-radius:8px"></div><div class="a t" style="left:1465.70px;top:668.67px;font-size:12.5px;font-weight:700;color:#fff;letter-spacing:-0.701px;">Normal</div><div class="a t" style="left:1590.44px;top:672.17px;font-size:14px;font-weight:400;color:#2d5a66;letter-spacing:-0.045px;">No tags</div><div class="a" style="left:221px;top:736px;width:1671px;height:1.3px;background:#2d5a66"></div><div class="a t" style="left:229.04px;top:707.77px;font-size:14px;font-weight:400;color:#222;letter-spacing:0.000px;">1.4</div><div class="a t" style="left:289.04px;top:707.77px;font-size:14px;font-weight:400;color:#222;letter-spacing:0.000px;">0</div><svg class="a" style="left:360px;top:708px;" width="18" height="18" viewBox="0 0 18 18"><circle cx="9" cy="9" r="7.5" fill="none" stroke="#2d5a66" stroke-width="1.3"/><path d="M5.6 9.3 L8 11.6 L12.4 6.8" fill="none" stroke="#2d5a66" stroke-width="1.3"/></svg><div class="a t" style="left:387.44px;top:708.67px;font-size:14px;font-weight:400;color:#1f3338;letter-spacing:0.000px;">Final Payment</div><div class="a" style="left:1067px;top:708px;width:47px;height:20px;background:#716bc3;border-radius:8px"></div><div class="a t" style="left:1074.52px;top:712.23px;font-size:12px;font-weight:700;color:#fff;letter-spacing:-0.417px;">To Do</div><div class="a t" style="left:1140.94px;top:709.97px;font-size:14px;font-weight:400;color:#168d5d;letter-spacing:0.456px;">01/30/2025</div><div class="a t" style="left:1235.94px;top:709.97px;font-size:14px;font-weight:400;color:#222;letter-spacing:0.456px;">02/08/2025</div><svg class="a" style="left:1407.6px;top:708.6px;" width="31" height="24" viewBox="0 0 31 24"><path d="M11.58 3.04 A9.4 9.4 0 1 0 21.71 11.09" fill="none" stroke="#2d5a66" stroke-width="1.3"/><circle cx="12.40" cy="11.10" r="3.4" fill="none" stroke="#2d5a66" stroke-width="1.3"/><path d="M6.57 18.98 A5.83 3.58 0 0 1 18.23 18.98" fill="none" stroke="#2d5a66" stroke-width="1.3"/><path d="M16.80 5.70 H22.40 M19.60 2.90 V8.50" stroke="#2d5a66" stroke-width="1.3"/></svg><div class="a" style="left:1458px;top:705px;width:55px;height:20px;background:#fd9327;border-radius:8px"></div><div class="a t" style="left:1465.70px;top:708.67px;font-size:12.5px;font-weight:700;color:#fff;letter-spacing:-0.701px;">Normal</div><div class="a t" style="left:1590.44px;top:712.17px;font-size:14px;font-weight:400;color:#2d5a66;letter-spacing:-0.045px;">No tags</div><div class="a" style="left:221px;top:776px;width:1671px;height:1.3px;background:#2d5a66"></div><div class="a t" style="left:229.04px;top:747.77px;font-size:14px;font-weight:400;color:#222;letter-spacing:0.000px;">1.5</div><div class="a t" style="left:289.04px;top:747.77px;font-size:14px;font-weight:400;color:#222;letter-spacing:0.000px;">0</div><svg class="a" style="left:360px;top:748px;" width="18" height="18" viewBox="0 0 18 18"><circle cx="9" cy="9" r="7.5" fill="none" stroke="#2d5a66" stroke-width="1.3"/><path d="M5.6 9.3 L8 11.6 L12.4 6.8" fill="none" stroke="#2d5a66" stroke-width="1.3"/></svg><div class="a t" style="left:387.44px;top:748.67px;font-size:14px;font-weight:400;color:#1f3338;letter-spacing:0.000px;">Progress Payment 3</div><div class="a" style="left:1067px;top:748px;width:47px;height:20px;background:#716bc3;border-radius:8px"></div><div class="a t" style="left:1074.52px;top:752.23px;font-size:12px;font-weight:700;color:#fff;letter-spacing:-0.417px;">To Do</div><div class="a t" style="left:1140.94px;top:749.97px;font-size:14px;font-weight:400;color:#168d5d;letter-spacing:0.572px;">02/11/2025</div><div class="a t" style="left:1235.94px;top:749.97px;font-size:14px;font-weight:400;color:#222;letter-spacing:0.456px;">02/20/2025</div><svg class="a" style="left:1407.6px;top:748.6px;" width="31" height="24" viewBox="0 0 31 24"><path d="M11.58 3.04 A9.4 9.4 0 1 0 21.71 11.09" fill="none" stroke="#2d5a66" stroke-width="1.3"/><circle cx="12.40" cy="11.10" r="3.4" fill="none" stroke="#2d5a66" stroke-width="1.3"/><path d="M6.57 18.98 A5.83 3.58 0 0 1 18.23 18.98" fill="none" stroke="#2d5a66" stroke-width="1.3"/><path d="M16.80 5.70 H22.40 M19.60 2.90 V8.50" stroke="#2d5a66" stroke-width="1.3"/></svg><div class="a" style="left:1458px;top:745px;width:55px;height:20px;background:#fd9327;border-radius:8px"></div><div class="a t" style="left:1465.70px;top:748.67px;font-size:12.5px;font-weight:700;color:#fff;letter-spacing:-0.701px;">Normal</div><div class="a t" style="left:1590.44px;top:752.17px;font-size:14px;font-weight:400;color:#2d5a66;letter-spacing:-0.045px;">No tags</div><div class="a" style="left:279.85px;top:577px;width:1.3px;height:200px;background:#2d5a66"></div><div class="a" style="left:349.85px;top:577px;width:1.3px;height:200px;background:#2d5a66"></div><div class="a" style="left:1049.9499999999998px;top:577px;width:1.3px;height:200px;background:#2d5a66"></div><div class="a" style="left:1129.75px;top:577px;width:1.3px;height:200px;background:#2d5a66"></div><div class="a" style="left:1224.9499999999998px;top:577px;width:1.3px;height:200px;background:#2d5a66"></div><div class="a" style="left:1319.85px;top:577px;width:1.3px;height:200px;background:#2d5a66"></div><div class="a" style="left:1439.6499999999999px;top:577px;width:1.3px;height:200px;background:#2d5a66"></div><div class="a" style="left:1529.9499999999998px;top:577px;width:1.3px;height:200px;background:#2d5a66"></div><div class="a" style="left:1579.9499999999998px;top:577px;width:1.3px;height:200px;background:#2d5a66"></div><div class="a" style="left:1882.85px;top:577px;width:1.3px;height:200px;background:#2d5a66"></div><svg class="a" style="left:1129px;top:614px;" width="98" height="44" viewBox="0 0 98 44"><rect x="1.8" y="1.8" width="94.4" height="40.4" fill="none" stroke="#ff1414" stroke-width="3.6"/></svg><div class="a" style="left:221px;top:777px;width:1671px;height:7px;background:#e3e3e3;box-shadow:0 2px 3px rgba(0,0,0,.12)"></div><div class="a" style="left:221px;top:817px;width:1671px;height:40px;background:#0e6657;border-radius:8px 8px 0 0"></div><div class="a t" style="left:248.86px;top:828.51px;font-size:16px;font-weight:400;-webkit-text-stroke:0.45px currentColor;color:#fff;letter-spacing:1.290px;">Preliminary Plans</div><div class="a t" style="left:401.36px;top:828.51px;font-size:16px;font-weight:400;-webkit-text-stroke:0.45px currentColor;color:#fff;letter-spacing:-0.182px;">| Completion: 0%</div><svg class="a" style="left:1776px;top:824px;" width="26" height="26" viewBox="0 0 26 26"><circle cx="12.95" cy="12.8" r="11.2" fill="none" stroke="#fff" stroke-width="1.4"/><path d="M12.95 7.6 V18 M7.75 12.8 H18.15" stroke="#fff" stroke-width="1.6"/></svg><svg class="a" style="left:1815px;top:826px;" width="24" height="24" viewBox="0 0 24 24"><path d="M2.2 14.8 L15.2 1.4 L20.8 6.8 L7.2 19.7 H2.2 Z M3.8 14.5 L7.3 18.3 M11.6 5.3 L17.3 10.5 M13.6 17.1 L18.6 12.3 L17.8 11.4" fill="none" stroke="#fff" stroke-width="1.3" stroke-linejoin="round"/></svg><svg class="a" style="left:1850px;top:826px;" width="20" height="22" viewBox="0 0 20 22"><path d="M1 4.2 H18.8 M6.2 4.2 V1 H13.9 V4.2 M3 4.2 V19.8 H17 V4.2 M7.6 8.2 V15.1 M12.2 8.2 V15.1" fill="none" stroke="#fff" stroke-width="1.3"/></svg><div class="a" style="left:205px;top:837px;width:1710px;height:14px;background:#e6e6e6;border-top:1px solid #3d5f63;box-sizing:border-box"></div><div class="a t" style="left:212.52px;top:840.83px;font-size:12px;font-weight:400;color:#333;letter-spacing:-0.006px;">v3.15.6</div><div class="a t" style="left:1649.52px;top:839.93px;font-size:12px;font-weight:400;color:#222;letter-spacing:0.004px;">Copyright © 2024 AnamiTech, All rights reserved</div>
</body></html>
